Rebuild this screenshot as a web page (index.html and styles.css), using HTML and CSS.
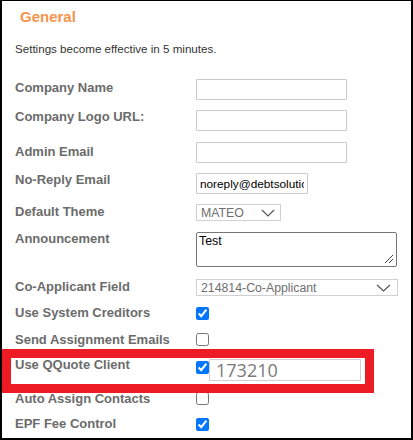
FILE: index.html
```html
<!DOCTYPE html>
<html>
<head>
<meta charset="utf-8">
<link rel="stylesheet" href="styles.css">
</head>
<body>
<div class="frame">
  <h2 class="title">General</h2>
  <p class="note">Settings become effective in 5 minutes.</p>
  <div class="form">
    <div class="label">Company Name</div>
    <div class="ctl up1"><input class="text" type="text"></div>

    <div class="label">Company Logo URL:</div>
    <div class="ctl dn1"><input class="text" type="text"></div>

    <div class="label">Admin Email</div>
    <div class="ctl up2"><input class="text" type="text"></div>

    <div class="label">No-Reply Email</div>
    <div class="ctl dn1"><input class="text short" type="text" value="noreply@debtsolutions.com"></div>

    <div class="label">Default Theme</div>
    <div class="ctl"><div class="select theme"><span>MATEO</span><svg class="chev" width="14" height="8" viewBox="0 0 14 8"><path d="M1 1 L7 7 L13 1" fill="none" stroke="#555" stroke-width="1.2"/></svg></div></div>

    <div class="label">Announcement</div>
    <div class="ctl dn1"><div class="area">Test<svg class="grip" width="10" height="10" viewBox="0 0 10 10"><path d="M9 1 L1 9 M9 5 L5 9" fill="none" stroke="#444" stroke-width="1"/></svg></div></div>

    <div class="label">Co-Applicant Field</div>
    <div class="ctl"><div class="select wide"><span>214814-Co-Applicant</span><svg class="chev" width="15" height="8" viewBox="0 0 15 8"><path d="M1 1 L7.5 7 L14 1" fill="none" stroke="#555" stroke-width="1.2"/></svg></div></div>

    <div class="label">Use System Creditors</div>
    <div class="ctl dn2"><input class="cb" type="checkbox" checked></div>

    <div class="label">Send Assignment Emails</div>
    <div class="ctl dn1"><input class="cb" type="checkbox"></div>

    <div class="label">Use QQuote Client</div>
    <div class="ctl dn2 row"><input class="cb cbq" type="checkbox" checked><input class="qq" type="text" value="173210"></div>

    <div class="label">Auto Assign Contacts</div>
    <div class="ctl dn1"><input class="cb" type="checkbox"></div>

    <div class="label">EPF Fee Control</div>
    <div class="ctl dn2"><input class="cb" type="checkbox" checked></div>
  </div>
  <div class="highlight"></div>
</div>
</body>
</html>
```
FILE: styles.css
```css
html, body {
  margin: 0;
  padding: 0;
  background: #fff;
}
.frame {
  position: relative;
  box-sizing: border-box;
  width: 413px;
  height: 440px;
  border: 2px solid #000;
  border-top-width: 1px;
  padding: 7px 0 0 13px;
  font-family: "Liberation Sans", Arial, sans-serif;
  overflow: hidden;
}
.title {
  margin: 0;
  padding-left: 5px;
  font-size: 15px;
  line-height: 17px;
  font-weight: bold;
  color: #f7944c;
}
.note {
  margin: 17px 0 0 0;
  font-size: 11.6px;
  line-height: 14px;
  color: #333;
}
.form {
  margin-top: 24px;
  display: grid;
  grid-template-columns: 181px 1fr;
  grid-template-rows: 29px 35px 28px 32px 27px 48px 26px 27px 25px 34px 25px 20px;
  align-items: start;
}
.label {
  font-size: 13px;
  line-height: 15px;
  font-weight: bold;
  color: #6b6b6b;
  white-space: nowrap;
}
.ctl { display: flex; }
.up1 { margin-top: -1px; }
.up2 { margin-top: -2px; }
.dn1 { margin-top: 1px; }
.dn2 { margin-top: 2px; }
.row { align-items: flex-start; }
.text {
  box-sizing: border-box;
  width: 151px;
  height: 21px;
  margin: 0;
  padding: 0 3px;
  border: 1px solid #c9c9c9;
  border-radius: 1px;
  font-family: "Liberation Sans", Arial, sans-serif;
  font-size: 12.3px;
  color: #000;
  outline: none;
}
.text.short { width: 112px; font-size: 11.8px; }
.select {
  box-sizing: border-box;
  height: 17px;
  border: 1px solid #d0d0d0;
  display: flex;
  align-items: center;
  justify-content: space-between;
  padding: 0 5px 0 4px;
  font-size: 12.3px;
  color: #6e6e6e;
}
.select.theme { width: 85px; padding-right: 5px; }
.select.wide { width: 202px; padding-right: 6px; }
.chev { display: block; }
.area {
  position: relative;
  box-sizing: border-box;
  width: 201px;
  height: 35px;
  border: 1px solid #767676;
  border-radius: 2px;
  padding: 1px 2px;
  font-size: 12.3px;
  line-height: 14px;
  color: #000;
}
.grip {
  position: absolute;
  right: 2px;
  bottom: 2px;
}
.cb {
  width: 13px;
  height: 13px;
  margin: 0;
  accent-color: #0075ff;
}
.cbq { margin-top: 2px; }
.qq {
  box-sizing: border-box;
  width: 152px;
  height: 22px;
  margin: 0;
  padding: 0 6px;
  border: 1px solid #cfcfcf;
  font-family: "Open Sans", sans-serif;
  font-size: 18px;
  color: #7a7a7a;
  outline: none;
}
.highlight {
  position: absolute;
  left: 0;
  top: 348px;
  width: 372px;
  height: 44px;
  box-sizing: border-box;
  border: 9px solid #ed1c24;
  pointer-events: none;
}
```
